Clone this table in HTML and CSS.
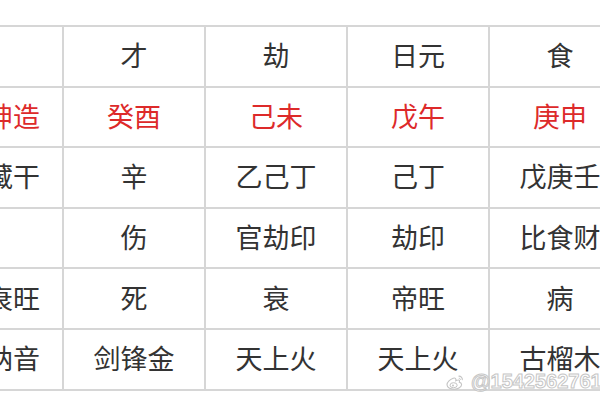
FILE: index.html
```html
<!DOCTYPE html>
<html lang="zh">
<head>
<meta charset="utf-8">
<link rel="stylesheet" href="styles.css">
</head>
<body>
<div class="page">
  <div class="chart">
    <div class="cell"></div><div class="cell">才</div><div class="cell">劫</div><div class="cell">日元</div><div class="cell">食</div>
    <div class="cell red">坤造</div><div class="cell red">癸酉</div><div class="cell red">己未</div><div class="cell red">戊午</div><div class="cell red">庚申</div>
    <div class="cell">藏干</div><div class="cell">辛</div><div class="cell">乙己丁</div><div class="cell">己丁</div><div class="cell">戊庚壬</div>
    <div class="cell"></div><div class="cell">伤</div><div class="cell">官劫印</div><div class="cell">劫印</div><div class="cell">比食财</div>
    <div class="cell">衰旺</div><div class="cell">死</div><div class="cell">衰</div><div class="cell">帝旺</div><div class="cell">病</div>
    <div class="cell">纳音</div><div class="cell">剑锋金</div><div class="cell">天上火</div><div class="cell">天上火</div><div class="cell">古榴木</div>
  </div>
  <div class="watermark">
    <svg class="wb-logo" viewBox="0 0 20 18" width="20" height="18">
      <path d="M8.2 5.2c-3 1.1-6.2 4-6.2 6.6 0 2.6 3.2 4.4 7 4.4 4.3 0 7.6-2.3 7.6-4.6 0-1.5-1.300-2.2-2.3-2.5.5-1.3.3-2.3-1.3-2.1-1 .1-2.2.7-2.2.7.5-1.7-.3-3.3-2.6-2.5z" fill="none" stroke="#c4c4c4" stroke-width="1.1"/>
      <ellipse cx="8.6" cy="12.2" rx="3.6" ry="2.5" fill="none" stroke="#c4c4c4" stroke-width="1"/>
      <circle cx="8" cy="12.4" r="1" fill="#c4c4c4"/>
      <path d="M13.5 3.2c2.2-.3 4.2 1.6 3.8 4" fill="none" stroke="#c4c4c4" stroke-width="1.1"/>
      <path d="M13.8 5.3c1-.1 1.8.7 1.6 1.7" fill="none" stroke="#c4c4c4" stroke-width="1"/>
    </svg>
    <span class="wb-text">@15425627618</span>
  </div>
</div>
</body>
</html>
```
FILE: styles.css
```css
html, body {
  margin: 0;
  padding: 0;
  background: #ffffff;
}
.page {
  position: relative;
  width: 600px;
  height: 400px;
  overflow: hidden;
  padding-top: 25px;
  box-sizing: border-box;
}
.chart {
  display: grid;
  grid-template-columns: 100px 142px 142px 142px 142px;
  grid-auto-rows: 60.6px;
  width: max-content;
  margin-left: -38px;
  border-top: 2px solid #d6d6d6;
  border-left: 2px solid #d6d6d6;
  font-family: "Noto Sans CJK SC", "Noto Sans", sans-serif;
  font-size: 27px;
  color: #333333;
}
.cell {
  box-sizing: border-box;
  border-right: 2px solid #d6d6d6;
  border-bottom: 2px solid #d6d6d6;
  display: flex;
  align-items: center;
  justify-content: center;
  line-height: 1;
  padding-bottom: 3px;
}
.red {
  color: #dd2a2a;
}
.watermark {
  position: absolute;
  left: 445px;
  top: 370px;
  display: flex;
  align-items: center;
  gap: 6px;
  white-space: nowrap;
}
.wb-text {
  font-family: "Liberation Sans", Arial, sans-serif;
  font-size: 20px;
  font-weight: bold;
  color: rgba(255, 255, 255, 0.7);
  -webkit-text-stroke: 1px #c6c6c6;
  letter-spacing: 0;
}
```
